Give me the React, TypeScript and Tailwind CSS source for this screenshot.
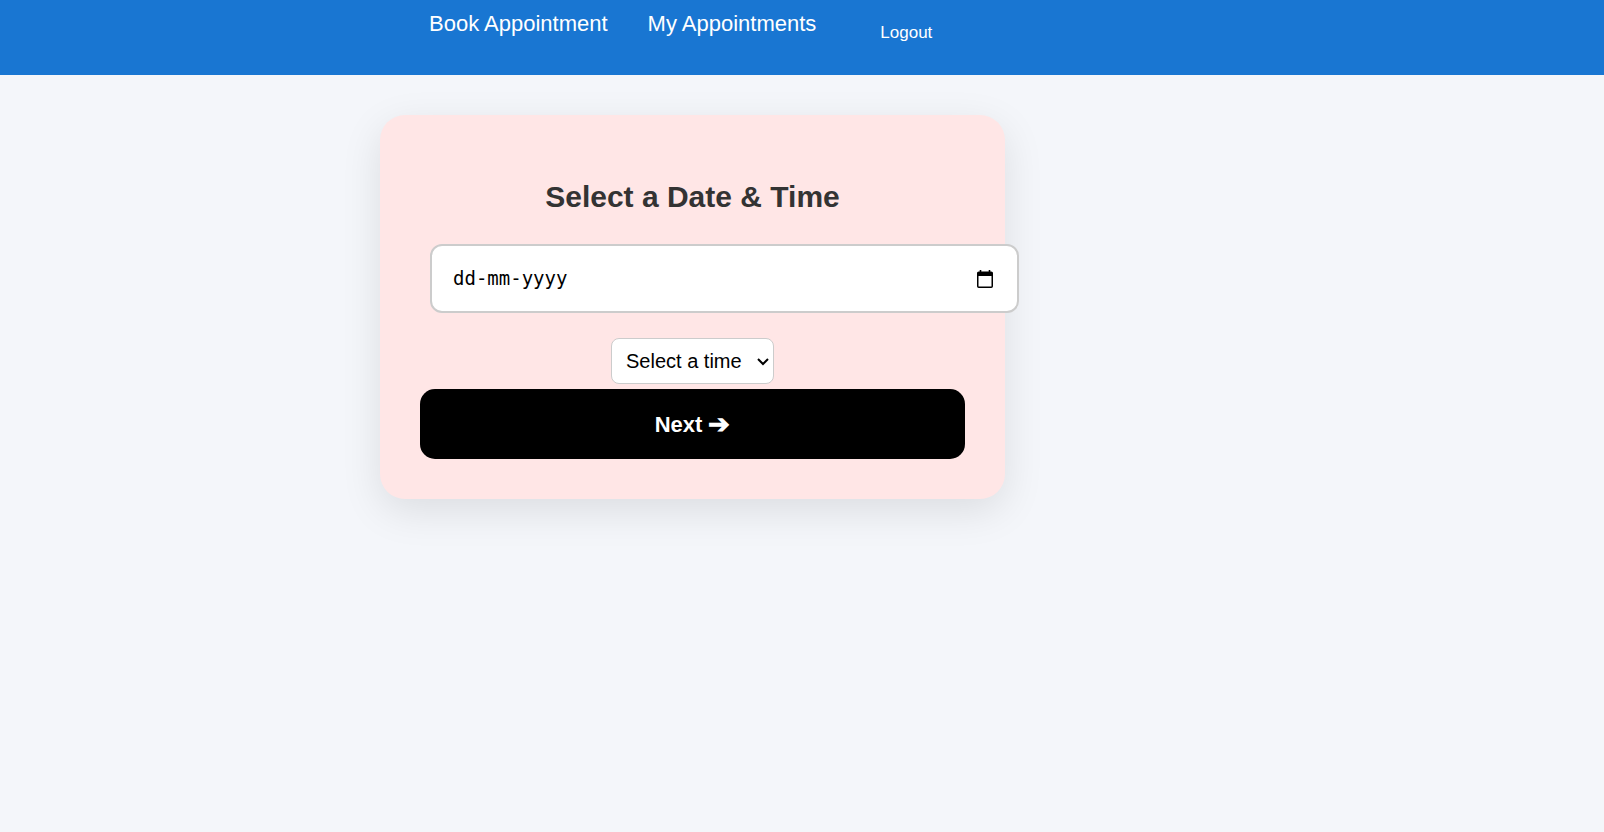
import { useState } from "react";

const times = ["09:00 AM", "10:00 AM", "11:00 AM", "02:00 PM", "03:00 PM"];

function CalendarIcon() {
  return (
    <svg width="16" height="18" viewBox="0 0 16 18" fill="none" aria-hidden="true">
      <rect x="0.75" y="2.25" width="14.5" height="15" rx="1" stroke="#000" strokeWidth="1.5" />
      <path d="M0.75 2h14.5v4H0.75z" fill="#000" />
      <path d="M3.5 0v3M12.5 0v3" stroke="#000" strokeWidth="1.6" />
    </svg>
  );
}

function NavBar() {
  return (
    <nav className="flex h-[75px] items-start gap-10 bg-[#1976d2] pl-[429px] text-[22px] leading-6 text-white">
      <a href="#book" className="mt-3 whitespace-nowrap">
        Book Appointment
      </a>
      <a href="#appointments" className="mt-3 whitespace-nowrap">
        My Appointments
      </a>
      <button type="button" className="mt-[21px] px-6 text-[17px]">
        Logout
      </button>
    </nav>
  );
}

export default function App() {
  const [date, setDate] = useState("");
  const [time, setTime] = useState("");

  return (
    <div className="min-h-screen bg-[#f4f6fa] font-['Liberation_Sans',Arial,sans-serif]">
      <NavBar />
      <main className="pt-10 pl-[380px]">
        <form
          className="flex w-full max-w-[625px] flex-col items-center rounded-[25px] bg-[#ffe6e6] p-10 shadow-[0_12px_40px_rgba(0,0,0,0.1)]"
          onSubmit={(e) => e.preventDefault()}
        >
          <h2 className="mt-6 mb-[30px] text-[30px] leading-[35px] font-bold text-[#333]">
            Select a Date &amp; Time
          </h2>
          <div className="ml-2.5 flex h-[69px] w-[calc(100%+44px)] shrink-0 items-center self-start rounded-xl border-2 border-[#ccc] bg-white pr-6 pl-[21px]">
            <input
              type="text"
              aria-label="Date"
              placeholder="dd-mm-yyyy"
              value={date}
              onChange={(e) => setDate(e.target.value)}
              className="min-w-0 flex-1 font-['DejaVu_Sans_Mono',monospace] text-[19px] text-black outline-none placeholder:text-black"
            />
            <button type="button" aria-label="Open calendar">
              <CalendarIcon />
            </button>
          </div>
          <div className="relative mt-[25px]">
            <select
              aria-label="Time"
              value={time}
              onChange={(e) => setTime(e.target.value)}
              className="block h-[46px] w-[163px] appearance-none rounded-lg border border-[#ccc] bg-white pl-[14px] text-xl text-black"
            >
              <option value="">Select a time</option>
              {times.map((t) => (
                <option key={t} value={t}>
                  {t}
                </option>
              ))}
            </select>
            <svg
              className="pointer-events-none absolute top-5 right-[5px]"
              width="12"
              height="8"
              viewBox="0 0 12 8"
              fill="none"
              aria-hidden="true"
            >
              <path d="M1 1l5 5 5-5" stroke="#000" strokeWidth="2" />
            </svg>
          </div>
          <button
            type="submit"
            className="mt-[5px] flex h-[70px] w-full items-center justify-center gap-1.5 rounded-[15px] bg-black text-[22px] font-bold text-white"
          >
            <span>Next</span>
            <span className="text-[26px] leading-6">➔</span>
          </button>
        </form>
      </main>
    </div>
  );
}
